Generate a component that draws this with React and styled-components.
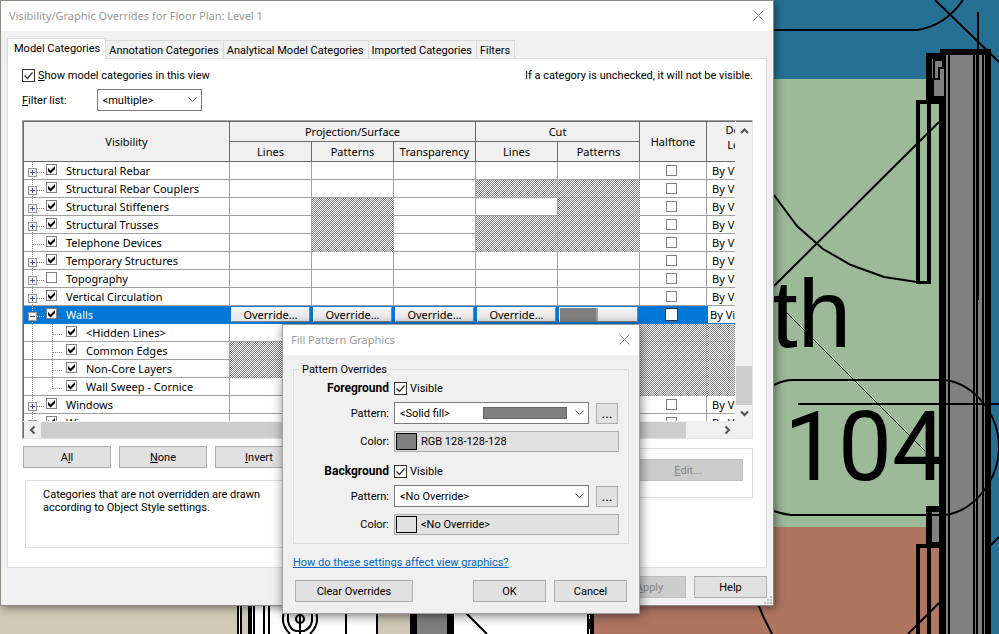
import { useState } from 'react';
import styled, { createGlobalStyle, css } from 'styled-components';

const HALF = 'half';
const rows = [
  { name: 'Structural Rebar', toggle: '+', checked: true, off: [] },
  { name: 'Structural Rebar Couplers', toggle: '+', checked: true, off: [3, 4] },
  { name: 'Structural Stiffeners', toggle: '+', checked: true, off: [1, 4] },
  { name: 'Structural Trusses', toggle: '+', checked: true, off: [1, 3, 4] },
  { name: 'Telephone Devices', checked: true, off: [1, 3, 4] },
  { name: 'Temporary Structures', toggle: '+', checked: true, off: [] },
  { name: 'Topography', toggle: '+', checked: false, off: [] },
  { name: 'Vertical Circulation', toggle: '+', checked: true, off: [] },
  { name: 'Walls', toggle: '-', checked: true, off: [], selected: true },
  { name: '<Hidden Lines>', child: true, checked: true, off: [1, 2, 4, HALF] },
  { name: 'Common Edges', child: true, checked: true, off: [0, 1, 2, 3, 4, HALF] },
  { name: 'Non-Core Layers', child: true, checked: true, off: [0, 1, 2, 3, 4, HALF] },
  { name: 'Wall Sweep - Cornice', child: true, last: true, checked: true, off: [1, 2, 4, HALF] },
  { name: 'Windows', toggle: '+', checked: true, off: [] },
  { name: 'Wires', toggle: '+', checked: true, off: [] },
];
const tabs = ['Model Categories', 'Annotation Categories', 'Analytical Model Categories', 'Imported Categories', 'Filters'];

export default function App() {
  return (
    <Desktop>
      <GlobalStyle />
      <FloorPlan />
      <OverridesDialog />
      <FillPatternDialog />
    </Desktop>
  );
}

function OverridesDialog() {
  const [tab, setTab] = useState(tabs[0]);

  return (
    <MainWindow role="dialog" aria-label="Visibility/Graphic Overrides">
      <TitleBar>
        <Title>Visibility/Graphic Overrides for Floor Plan: Level 1</Title>
        <CloseButton />
      </TitleBar>
      <MainBody>
        <Tabs role="tablist">
          {tabs.map((t) => (
            <Tab key={t} role="tab" aria-selected={t === tab} $active={t === tab} onClick={() => setTab(t)}>
              {t}
            </Tab>
          ))}
        </Tabs>
        <Panel>
          <TopLine>
            <CheckLabel>
              <Check defaultChecked />
              <span>
                <u>S</u>how model categories in this view
              </span>
            </CheckLabel>
            <span>If a category is unchecked, it will not be visible.</span>
          </TopLine>
          <FilterLine>
            <label htmlFor="filter">
              <u>F</u>ilter list:
            </label>
            <FilterSelect id="filter">
              <option>&lt;multiple&gt;</option>
            </FilterSelect>
          </FilterLine>
          <Grid>
            <GridView>
              <CategoryTable />
            </GridView>
            <VerticalBar>
              <Chevron dir="up" />
              <VerticalThumb />
              <Chevron dir="down" />
            </VerticalBar>
            <HorizontalBar>
              <Chevron dir="left" />
              <HorizontalThumb />
              <Chevron dir="right" />
            </HorizontalBar>
          </Grid>
          <Lower>
            <div>
              <Picks>
                <WideButton>
                  A<u>l</u>l
                </WideButton>
                <WideButton>
                  <u>N</u>one
                </WideButton>
                <WideButton>
                  <u>I</u>nvert
                </WideButton>
              </Picks>
              <Note>
                <p>Categories that are not overridden are drawn according to Object Style settings.</p>
              </Note>
            </div>
            <HostLayers>
              <EditButton disabled>
                <u>E</u>dit...
              </EditButton>
            </HostLayers>
          </Lower>
        </Panel>
        <MainActions>
          <Button disabled>
            <u>A</u>pply
          </Button>
          <Button>Help</Button>
        </MainActions>
      </MainBody>
      <Grip viewBox="0 0 9 9">
        {[[6, 0], [3, 3], [6, 3], [0, 6], [3, 6], [6, 6]].map(([x, y]) => (
          <rect key={`${x}-${y}`} x={x} y={y} width="2" height="2" fill="#bfbfbf" />
        ))}
      </Grip>
    </MainWindow>
  );
}

function CategoryTable() {
  return (
    <Table>
      <colgroup>
        <Col $width={206} />
        {[0, 1, 2, 3, 4].map((n) => (
          <Col key={n} $width={82} />
        ))}
        <Col $width={67} />
        <Col $width={68} />
      </colgroup>
      <thead>
        <tr>
          <Head rowSpan={2}>Visibility</Head>
          <Head colSpan={3}>Projection/Surface</Head>
          <Head colSpan={2}>Cut</Head>
          <Head rowSpan={2}>Halftone</Head>
          <Head rowSpan={2} $top>
            Detail
            <br />
            Level
          </Head>
        </tr>
        <tr>
          <Head>Lines</Head>
          <Head>Patterns</Head>
          <Head>Transparency</Head>
          <Head>Lines</Head>
          <Head>Patterns</Head>
        </tr>
      </thead>
      <tbody>
        {rows.map((row) => (
          <Row key={row.name} $selected={row.selected}>
            <Cell>
              <NameCell>
                <Branch row={row} />
                <TreeLabel>
                  <TreeCheck defaultChecked={row.checked} />
                  {row.name}
                </TreeLabel>
              </NameCell>
            </Cell>
            {[0, 1, 2, 3, 4].map((n) => (
              <Cell key={n} $hatch={row.off.includes(n)}>
                {row.selected && n < 4 && <OverrideButton>Override...</OverrideButton>}
                {row.selected && n === 4 && (
                  <OverrideButton aria-label="Cut patterns">
                    <OverrideSwatch />
                  </OverrideButton>
                )}
              </Cell>
            ))}
            <Cell $hatch={row.child}>
              {!row.child && (
                <Center>
                  <TreeCheck aria-label={`${row.name} halftone`} $large={row.selected} />
                </Center>
              )}
            </Cell>
            <Cell $hatch={row.child}>{!row.child && <Level $boxed={row.selected}>By View</Level>}</Cell>
          </Row>
        ))}
      </tbody>
    </Table>
  );
}

function Branch({ row }) {
  const line = { stroke: row.selected ? '#d0e4f8' : '#8c8c8c', strokeDasharray: '1 1', fill: 'none' };

  return (
    <BranchSvg width={row.child ? 42 : 22} height="18" shapeRendering="crispEdges">
      <path d="M8.5 0V18" {...line} />
      {row.child && <path d={row.last ? 'M28.5 0V11' : 'M28.5 0V18'} {...line} />}
      <path d={row.child ? 'M29 10.5H39' : 'M9 10.5H20'} {...line} />
      {row.toggle && (
        <>
          <rect x="4.5" y="6.5" width="8" height="8" rx="1" fill="#f4f4f4" stroke="#969696" />
          <path d={row.toggle === '+' ? 'M6 10.5H11M8.5 8V13' : 'M6 10.5H11'} stroke="#3a54a0" />
        </>
      )}
    </BranchSvg>
  );
}

function FillPatternDialog() {
  return (
    <FillWindow role="dialog" aria-label="Fill Pattern Graphics">
      <TitleBar>
        <Title>Fill Pattern Graphics</Title>
        <CloseButton />
      </TitleBar>
      <FillBody>
        <Group>
          <legend>Pattern Overrides</legend>
          <PatternFields title="Foreground" pattern="<Solid fill>" color="RGB 128-128-128" solid />
          <PatternFields title="Background" pattern="<No Override>" color="<No Override>" />
        </Group>
        <HelpLink href="#help">How do these settings affect view graphics?</HelpLink>
        <FillActions>
          <ClearButton>Clear Overrides</ClearButton>
          <Button>OK</Button>
          <Button>Cancel</Button>
        </FillActions>
      </FillBody>
    </FillWindow>
  );
}

function PatternFields({ title, pattern, color, solid }) {
  return (
    <Fields>
      <strong>{title}</strong>
      <CheckLabel>
        <Check defaultChecked />
        <span>Visible</span>
      </CheckLabel>
      <label htmlFor={`${title}-pattern`}>Pattern:</label>
      <PatternLine>
        <SelectBox>
          <Select id={`${title}-pattern`}>
            <option>{pattern}</option>
          </Select>
          {solid && <PatternSwatch />}
        </SelectBox>
        <MoreButton aria-label={`Browse ${title}`}>...</MoreButton>
      </PatternLine>
      <label htmlFor={`${title}-color`}>Color:</label>
      <ColorButton id={`${title}-color`}>
        <ColorSwatch $fill={solid ? '#808080' : '#e1e1e1'} />
        {color}
      </ColorButton>
    </Fields>
  );
}

function CloseButton() {
  return (
    <Close aria-label="Close">
      <svg width="11" height="11" viewBox="0 0 11 11">
        <path d="M.5.5l10 10M10.5.5l-10 10" stroke="#8c8c8c" fill="none" />
      </svg>
    </Close>
  );
}

function Chevron({ dir }) {
  const paths = {
    up: 'M5 11L8.5 7.5L12 11',
    down: 'M5 6.5L8.5 10L12 6.5',
    left: 'M10.5 4.5L7 8L10.5 11.5',
    right: 'M6.5 4.5L10 8L6.5 11.5',
  };

  return (
    <ScrollButton aria-label={`Scroll ${dir}`}>
      <svg width="17" height="16">
        <path d={paths[dir]} fill="none" stroke="#505050" strokeWidth="2" />
      </svg>
    </ScrollButton>
  );
}

function FloorPlan() {
  return (
    <Plan viewBox="0 0 999 634" preserveAspectRatio="xMinYMin slice">
      <rect width="999" height="634" fill="#267093" />
      <rect y="79" width="940" height="448" fill="#9cb998" />
      <rect y="527" width="940" height="107" fill="#ae7561" />
      <rect y="0" width="237" height="634" fill="#d0c9b5" />
      <g shapeRendering="crispEdges">
        <rect x="237" y="600" width="352" height="34" fill="#fff" />
        <rect x="241" y="600" width="8" height="34" fill="#d0c9b5" />
        <rect x="378" y="600" width="32" height="34" fill="#d0c9b5" />
        <rect x="417" y="600" width="30" height="34" fill="#808080" />
        <path d="M237 600h2v34h-2zM240 600h2v34h-2zM248 600h4v34h-4zM253 600h2v34h-2zM263 600h2v34h-2zM268 600h2v34h-2zM345 600h2v34h-2zM376 600h2v34h-2zM410 600h7v34h-7zM447 600h7v34h-7zM587 600h7v34h-7z" />
        <path d="M589 615h1v4h-1zM589 629h1v5h-1z" fill="#fff" />
      </g>
      <g fill="none" stroke="#000" strokeWidth="2">
        <circle cx="300" cy="619" r="4" />
        <path d="M288 612V621Q290 630 296 631H304Q311 628 312 621V612" />
        <path d="M284 612Q280 624 290 634M316 612Q320 624 310 634M300 614V634M465 612L487 634M758 604L763 616L772 634" />
        <path d="M774 30H917Q945 26 963 0M935 0L999 62M774 286L939 122" />
        <path d="M774 195L797 226L823 249L851 265L884 277L917 282" />
      </g>
      <g shapeRendering="crispEdges">
        <rect x="940" y="50" width="51" height="584" fill="#808080" />
        <rect x="929" y="56" width="17" height="44" fill="#808080" />
        <rect x="929" y="509" width="17" height="36" fill="#808080" />
        <path d="M940 49h51v6h-51zM939 98h7v536h-7zM985 50h6v584h-6zM948 55h2v579h-2zM973 55h2v579h-2zM976 55h2v579h-2zM982 55h2v579h-2z" />
        <path d="M926 53h20v6h-20zM926 53h6v51h-6zM926 98h20v6h-20zM926 506h20v6h-20zM926 506h6v42h-6zM926 542h20v6h-20zM944 506h2v42h-2z" />
        <path d="M916 100h15v184h-15zM920 104v177h7v-177z" fillRule="evenodd" />
        <path d="M916 544h15v4h-15zM916 544h4v90h-4zM927 544h4v90h-4z" />
        <path d="M945 59V97H933V79H939V68H945M934 79V60H943V68" fill="none" stroke="#000" strokeWidth="2" />
        <path d="M977 12h2v288h-2z" />
      </g>
      <g fill="none" stroke="#000" strokeWidth="2">
        <path d="M774 385Q784 380 793 380H945C975 384 999 415 999 447S975 511 945 515H791Q782 514 774 511" />
        <path d="M798 404H999M908 634L939 603M991 545L999 537" />
        <path d="M783 309L925 451" strokeWidth="1" />
      </g>
      <PlanText x="771" y="347">
        th
      </PlanText>
      <RoomNumber x="784" y="480">
        104
      </RoomNumber>
    </Plan>
  );
}

const arrow = `url("data:image/svg+xml,%3Csvg xmlns='http://www.w3.org/2000/svg' width='9' height='6'%3E%3Cpath d='M.5.5l4 4 4-4' fill='none' stroke='%23444'/%3E%3C/svg%3E")`;
const thinTick = `url("data:image/svg+xml,%3Csvg xmlns='http://www.w3.org/2000/svg' width='11' height='11'%3E%3Cpath d='M1.5 5.5l3 3 5-6' fill='none' stroke='%23333' stroke-width='1.3'/%3E%3C/svg%3E")`;
const thickTick = `url("data:image/svg+xml,%3Csvg xmlns='http://www.w3.org/2000/svg' width='9' height='9'%3E%3Cpath d='M1 3v3l2.5 2.5L8 4V1L3.5 5.5z'/%3E%3C/svg%3E")`;

const GlobalStyle = createGlobalStyle`
  * {
    box-sizing: border-box;
  }
  body {
    margin: 0;
    font-family: Roboto, 'Liberation Sans', sans-serif;
    font-size: 11px;
    line-height: 13px;
    color: #000;
  }
  button, select {
    font: inherit;
    color: inherit;
  }
`;
const Desktop = styled.main`
  position: relative;
  height: 100vh;
  min-height: 614px;
  overflow: hidden;
  background: #267093;
`;
const Plan = styled.svg`
  display: block;
  width: 100%;
  height: 100%;
`;
const PlanText = styled.text`
  font-family: 'Liberation Sans', sans-serif;
  font-size: 96px;
`;
const RoomNumber = styled(PlanText)`
  font-family: Roboto, sans-serif;
`;
const dialogBox = css`
  position: absolute;
  background: #f0f0f0;
  border: 1px solid #8c8c84;
`;
const MainWindow = styled.section`
  ${dialogBox}
  top: 0;
  left: 0;
  width: calc(100% - 225px);
  min-width: 660px;
  box-shadow: 2px 2px 8px rgba(0, 0, 0, 0.45);
`;
const FillWindow = styled.section`
  ${dialogBox}
  top: 324px;
  left: 282px;
  width: 358px;
  border-color: #a0a0a0;
  box-shadow: 1px 2px 10px rgba(0, 0, 0, 0.5);
`;
const TitleBar = styled.header`
  display: flex;
  align-items: center;
  justify-content: space-between;
  height: 30px;
  padding: 0 8px 2px;
  background: #fff;
`;
const Title = styled.h1`
  margin: 0;
  font-family: 'Noto Sans', sans-serif;
  font-size: 11px;
  font-weight: 400;
  color: #999;
`;
const Close = styled.button`
  display: flex;
  padding: 0 1px;
  border: 0;
  background: none;
`;
const MainBody = styled.div`
  padding: 7px 6px;
`;
const Tabs = styled.div`
  display: flex;
  align-items: flex-end;
`;
const Tab = styled.button`
  height: 18px;
  padding: 2px 4px 0 3px;
  border: 1px solid #d9d9d9;
  border-width: 1px 1px 0 0;
  background: #f0f0f0;

  ${(p) =>
    p.$active &&
    css`
      height: 21px;
      margin-bottom: -1px;
      padding: 0 5px 2px 6px;
      border-left-width: 1px;
      background: #fff;
      z-index: 1;
    `}
`;
const Panel = styled.div`
  padding: 10px 13px 19px 14px;
  border: 1px solid #dcdcdc;
  background: #fff;
`;
const TopLine = styled.div`
  display: flex;
  justify-content: space-between;
`;
const CheckLabel = styled.label`
  display: flex;
  align-items: center;
  gap: 3px;
`;
const Check = styled.input.attrs({ type: 'checkbox' })`
  appearance: none;
  width: 13px;
  height: 13px;
  margin: 0;
  border: 1px solid #333;
  background: #fff;

  &:checked {
    background-image: ${thinTick};
  }
`;
const FilterLine = styled.div`
  display: flex;
  align-items: center;
  gap: 30px;
  margin: 7px 0 9px;
`;
const Select = styled.select`
  appearance: none;
  width: 100%;
  height: 22px;
  padding: 0 5px;
  border: 1px solid #7a7a7a;
  border-radius: 0;
  background: #fff ${arrow} no-repeat right 4px center;
`;
const FilterSelect = styled(Select)`
  width: 105px;
`;
const Grid = styled.div`
  display: grid;
  grid-template-columns: minmax(0, 1fr) 16px;
  border: 1px solid #e3e3e3;
  border-top-color: #a0a0a0;
  border-left-color: #a0a0a0;
  background: #f0f0f0;
`;
const GridView = styled.div`
  height: 300px;
  margin-right: 1px;
  border: 1px solid #696969;
  border-width: 1px 0 0 1px;
  overflow: hidden;
  background: #fff;
`;
const VerticalBar = styled.div`
  display: flex;
  flex-direction: column;
  border-top: 1px solid #696969;
`;
const HorizontalBar = styled.div`
  display: flex;
  margin-top: 1px;
  border-left: 1px solid #696969;
`;
const ScrollButton = styled.button`
  display: flex;
  padding: 0;
  border: 0;
  background: #f0f0f0;
`;
const VerticalThumb = styled.div`
  height: 39px;
  margin-top: auto;
  background: #cdcdcd;
`;
const HorizontalThumb = styled.div`
  flex: 1;
  margin-right: 33px;
  background: #cdcdcd;
`;
const Table = styled.table`
  width: 751px;
  table-layout: fixed;
  border-collapse: separate;
  border-spacing: 0;
  font-family: 'Noto Sans', sans-serif;
`;
const Col = styled.col`
  width: ${(p) => p.$width}px;
`;
const Head = styled.th`
  height: 20px;
  padding: 0;
  border: 1px solid #696969;
  border-width: 0 1px 1px 0;
  background: #f0f0f0;
  font-weight: 400;
  line-height: 15px;
  vertical-align: ${(p) => (p.$top ? 'top' : 'middle')};
`;
const Cell = styled.td`
  height: 18px;
  padding: 0;
  border: 1px solid #a0a0a0;
  border-width: 0 1px 1px 0;

  ${(p) =>
    p.$hatch &&
    css`
      border-color: rgba(128, 128, 128, 0.3);
      background: repeating-conic-gradient(#808080 0 25%, #fff 0 50%) 0 0 / 2px 2px;
    `}
`;
const Row = styled.tr`
  background: ${(p) => (p.$selected ? '#0078d7' : '#fff')};
  color: ${(p) => (p.$selected ? '#fff' : '#000')};

  ${Cell} {
    ${(p) => p.$selected && 'border-color: #0078d7;'}
  }
`;
const NameCell = styled.div`
  display: flex;
  height: 17px;
`;
const BranchSvg = styled.svg`
  flex: none;
`;
const TreeLabel = styled.label`
  display: flex;
  align-items: center;
  gap: 9px;
`;
const TreeCheck = styled.input.attrs({ type: 'checkbox' })`
  appearance: none;
  width: ${(p) => (p.$large ? 13 : 11)}px;
  height: ${(p) => (p.$large ? 13 : 11)}px;
  margin: 0;
  border: 1px solid ${(p) => (p.$large ? '#333' : '#808080')};
  background: #fff;

  &:checked {
    background-image: ${thickTick};
  }

  ${TreeLabel} & {
    margin-bottom: 3px;
  }
`;
const Center = styled.div`
  display: flex;
  justify-content: center;
  padding-right: 3px;
`;
const Level = styled.div`
  height: 17px;
  padding-left: 5px;
  line-height: 18px;

  ${(p) =>
    p.$boxed &&
    css`
      margin-left: 1px;
      padding-left: 2px;
      background: #fff;
      color: #000;
    `}
`;
const OverrideButton = styled.button`
  display: flex;
  justify-content: center;
  width: calc(100% - 2px);
  height: 15px;
  margin: 1px;
  padding: 0;
  border: 1px solid;
  border-color: #fff #808080 #808080 #fff;
  background: linear-gradient(#f4f4f4, #e6e6e6);
  color: #000;
  line-height: 13px;
`;
const OverrideSwatch = styled.span`
  width: 38px;
  height: 13px;
  margin-right: auto;
  border-right: 2px solid #a0a0a0;
  background: #808080;
`;
const Lower = styled.div`
  display: flex;
  justify-content: space-between;
  margin-top: 7px;
`;
const Picks = styled.div`
  display: flex;
  gap: 8px;
`;
const Button = styled.button`
  width: 73px;
  height: 22px;
  padding: 0;
  border: 1px solid #adadad;
  background: #e1e1e1;

  &:disabled {
    border-color: #bfbfbf;
    background: #ccc;
    color: #838383;
  }
`;
const WideButton = styled(Button)`
  width: 88px;
  margin-left: 1px;
  margin-right: -1px;
`;
const EditButton = styled(Button)`
  width: 110px;
`;
const Note = styled.div`
  width: 290px;
  height: 68px;
  margin: 12px 0 0 3px;
  padding: 7px 17px;
  border: 1px solid #dcdcdc;

  p {
    width: 230px;
    margin: 0;
  }
`;
const HostLayers = styled.div`
  display: flex;
  justify-content: flex-end;
  width: 220px;
  height: 50px;
  margin-top: 2px;
  padding: 10px 9px;
  border: 1px solid #dcdcdc;
`;
const MainActions = styled.div`
  display: flex;
  justify-content: flex-end;
  gap: 8px;
  padding-top: 8px;
`;
const Grip = styled.svg`
  position: absolute;
  right: 0;
  bottom: 0;
  width: 9px;
  height: 9px;
`;
const FillBody = styled.div`
  padding: 8px 10px 11px;
`;
const Group = styled.fieldset`
  display: flex;
  flex-direction: column;
  gap: 13px;
  margin: 0;
  padding: 6px 9px 8px 8px;
  border: 1px solid #dcdcdc;

  legend {
    margin-left: -2px;
    padding: 0 2px;
  }
`;
const Fields = styled.div`
  display: grid;
  grid-template-columns: 87px 1fr;
  column-gap: 5px;
  row-gap: 7px;
  align-items: center;

  > strong, > label:not(${CheckLabel}) {
    text-align: right;
  }

  > strong {
    font-size: 12px;
  }
`;
const PatternLine = styled.div`
  display: flex;
  align-items: center;
  gap: 7px;
`;
const SelectBox = styled.div`
  position: relative;
  flex: 1;
`;
const PatternSwatch = styled.span`
  position: absolute;
  top: 5px;
  right: 22px;
  width: 84px;
  height: 12px;
  border: 1px solid #666;
  background: #808080;
  pointer-events: none;
`;
const MoreButton = styled(Button)`
  width: 22px;
  height: 21px;
  margin-right: 1px;
  font-size: 14px;
`;
const ColorButton = styled(Button)`
  display: flex;
  align-items: center;
  gap: 4px;
  width: 100%;
  height: 21px;
  padding: 0 1px;
`;
const ColorSwatch = styled.span`
  width: 21px;
  height: 17px;
  border: 1px solid #000;
  background: ${(p) => p.$fill};
`;
const HelpLink = styled.a`
  display: inline-block;
  margin: 12px 0 11px;
  color: #0066cc;
`;
const FillActions = styled.div`
  display: flex;
  gap: 8px;
  padding: 0 2px;
`;
const ClearButton = styled(Button)`
  width: 118px;
  margin-right: auto;
`;
